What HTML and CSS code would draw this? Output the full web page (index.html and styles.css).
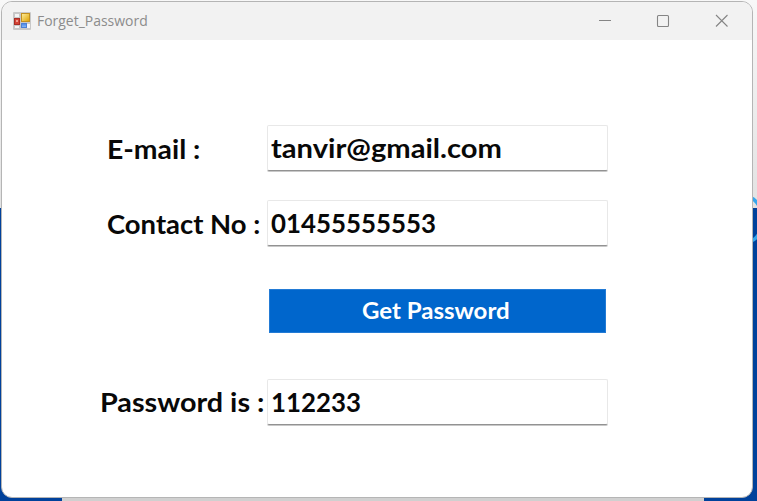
FILE: index.html
```html
<!DOCTYPE html>
<html lang="en">
<head>
<meta charset="utf-8">
<title>Forget_Password</title>
<link rel="stylesheet" href="styles.css">
</head>
<body>
<svg class="backdrop" width="757" height="501" aria-hidden="true">
  <defs><linearGradient id="shade" x2="0" y2="1"><stop stop-color="#f8f8f8"/><stop offset="1" stop-color="#e2e2e2"/></linearGradient></defs>
  <rect width="757" height="208" fill="url(#shade)"/>
  <rect y="208" width="757" height="293" fill="#00419b"/>
  <rect x="62" y="497" width="642" height="4" fill="#d0d0d0"/>
  <path d="M751 198Q755 199 759 206M751 241Q755 240 759 234" fill="none" stroke="#36a6ec" stroke-width="3.5"/>
</svg>
<main class="window">
  <header class="titlebar">
    <svg class="app-icon" width="18" height="18" viewBox="0 0 18 18">
      <defs>
        <linearGradient id="gold" x2="1" y2="1"><stop stop-color="#fff0a0"/><stop offset="1" stop-color="#dda000"/></linearGradient>
        <linearGradient id="blue" x2="0" y2="1"><stop stop-color="#4583e6"/><stop offset="1" stop-color="#8cbcf8"/></linearGradient>
      </defs>
      <rect width="18" height="18" rx="1" fill="#c8c8c8"/>
      <path d="M2 2h4v3H2zM2 14h4v2H2zM14 12h3v4h-3z" fill="#f5f5f5"/>
      <rect x="8.5" y="1.5" width="8" height="8" fill="url(#gold)" stroke="#c39020"/>
      <rect x="1.5" y="6.5" width="5" height="6" fill="#d44436" stroke="#a92d25"/>
      <rect x="3" y="8" width="2" height="2" fill="#f4a093"/>
      <rect x="8.5" y="11.5" width="5" height="4" fill="url(#blue)" stroke="#4b80d5"/>
    </svg>
    <span class="title">Forget_Password</span>
    <svg class="controls" width="132" height="14" viewBox="0 0 132 14" fill="none" stroke="#858585" stroke-width="1.1">
      <path d="M0 6.5h12"/>
      <rect x="58.5" y="1.5" width="11" height="11" rx="1"/>
      <path d="M117 1l11.5 11.5M128.5 1l-11.5 11.5"/>
    </svg>
  </header>
  <form class="form">
    <div class="row email"><label><span class="t">E-mail :</span></label><div class="field"><span class="t">tanvir@gmail.com</span></div></div>
    <div class="row contact"><label><span class="t">Contact No :</span></label><div class="field"><span class="t">01455555553</span></div></div>
    <button type="button"><span class="t">Get Password</span></button>
    <div class="row result"><label><span class="t">Password is :</span></label><div class="field"><span class="t">112233</span></div></div>
  </form>
</main>
</body>
</html>
```
FILE: styles.css
```css
* { box-sizing: border-box; }
body { margin: 0; width: 757px; height: 501px; overflow: hidden; padding: 1px; font-family: Lato, sans-serif; }
.backdrop { position: absolute; top: 0; left: 0; z-index: -1; }
.window { width: 752px; height: 497px; border: 1px solid #b5b5b5; border-radius: 11px; overflow: hidden; background: #fff; }
.titlebar { height: 38px; background: #f2f2f2; display: flex; align-items: center; padding-left: 11px; }
.title { font: 15px/20px "Open Sans", sans-serif; color: #8c8c8c; margin: -2px 0 0 6px; width: 130px; transform: scaleX(.93); transform-origin: left; }
.controls { margin-left: auto; margin-right: 21px; }
.form { padding-top: 85px; font-size: 26px; font-weight: 700; color: #080808; }
.row { display: flex; height: 47px; margin-bottom: 28px; }
label { width: 265px; padding-left: 105px; line-height: 48px; white-space: nowrap; }
.result label { padding-left: 98px; line-height: 47px; }
.field { width: 341px; height: 46px; border: 1px solid #e8e8e8; border-bottom-color: #929292; border-radius: 2px; box-shadow: 0 1px #c8c8c8; padding-left: 3px; line-height: 45px; }
.t { display: inline-block; transform-origin: left; }
.email label .t { transform: scaleX(1.09); }
.email .field .t { transform: scaleX(1.12); }
.contact label .t { transform: scaleX(1.055); }
.result label .t { transform: scaleX(1.105); }
.contact .field .t, .result .field .t { transform: scaleX(.994); }
button { display: block; margin: 42px 0 46px 267px; width: 337px; height: 44px; padding: 0; border: 1px solid #237bd5; background: #0066cc; color: #fff; font: 700 23px/40px Lato, sans-serif; }
button .t { transform: translateY(-1px) scaleX(1.045); transform-origin: 80% 50%; }
```
